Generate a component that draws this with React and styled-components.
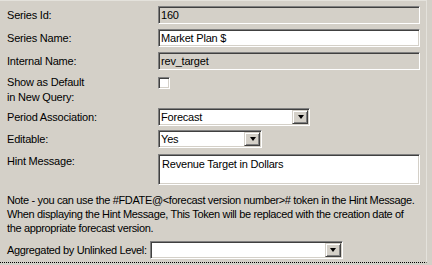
import styled, { createGlobalStyle } from "styled-components"

const Global = createGlobalStyle`
  body {
    margin: 0;
    background: #d4d0c8;
    font-family: "Liberation Sans", Arial, sans-serif;
    font-size: 11px;
    letter-spacing: -0.2px;
    color: #000;
  }
`

// panneau principal, façon boîte de dialogue Windows classique
const Panel = styled.div`
  width: 427px;
  height: 263px;
  box-sizing: border-box;
  background: #d4d0c8;
  border-right: 1px solid #e4e2dc;
  border-top: 1px solid #e4e2dc;
  padding: 5px 0 0 7px;
  border-bottom: 1px dotted #000;
  overflow: hidden;
`

const Row = styled.div`
  display: grid;
  grid-template-columns: 151px 1fr;
  align-items: ${p => (p.top ? "start" : "center")};
  margin-bottom: ${p => p.gap ?? 5}px;
  height: ${p => p.h}px;
`

const Label = styled.div`
  line-height: 15px;
  white-space: nowrap;
  letter-spacing: ${p => (p.tight ? "-0.35px" : "inherit")};
`

const Sunken = styled.div`
  box-sizing: border-box;
  width: ${p => p.w}px;
  height: ${p => p.h || 18}px;
  background: ${p => (p.ro ? "#d4d0c8" : "#fff")};
  border-top: 1px solid #808080;
  border-left: 1px solid #808080;
  border-right: 1px solid #fff;
  border-bottom: 1px solid #fff;
  box-shadow: inset 1px 1px 0 #404040, inset -1px -1px 0 #d4d0c8;
  padding: ${p => (p.multi ? "3px 3px" : "0 2px")};
  display: flex;
  align-items: ${p => (p.multi ? "flex-start" : "center")};
  justify-content: space-between;
  font-size: 11px;
`

const Check = styled.div`
  width: 12px;
  height: 12px;
  box-sizing: border-box;
  background: #fff;
  border-top: 1px solid #808080;
  border-left: 1px solid #808080;
  border-right: 1px solid #fff;
  border-bottom: 1px solid #fff;
  box-shadow: inset 1px 1px 0 #404040, inset -1px -1px 0 #d4d0c8;
  margin-top: 2px;
`

const DropBtn = styled.div`
  width: 16px;
  height: 14px;
  box-sizing: border-box;
  background: #d4d0c8;
  border-top: 1px solid #d4d0c8;
  border-left: 1px solid #d4d0c8;
  border-right: 1px solid #404040;
  border-bottom: 1px solid #404040;
  box-shadow: inset 1px 1px 0 #fff, inset -1px -1px 0 #808080;
  display: flex;
  align-items: center;
  justify-content: center;
  margin-right: -1px;
`

const Arrow = styled.div`
  width: 0;
  height: 0;
  border-left: 3.5px solid transparent;
  border-right: 3.5px solid transparent;
  border-top: 4px solid #000;
  margin-left: 1px;
`

const Note = styled.p`
  margin: 8px 0 6px;
  line-height: 14px;
  letter-spacing: -0.35px;
  white-space: nowrap;
`

const AggRow = styled.div`
  display: flex;
  align-items: center;
  gap: 3px;
`

const Select = ({ w, value }) => (
  <Sunken w={w}>
    <span>{value}</span>
    <DropBtn>
      <Arrow />
    </DropBtn>
  </Sunken>
)

const App = () => {
  return (
    <>
      <Global />
      <Panel>
        <Row h={18}>
          <Label>Series Id:</Label>
          <Sunken w={262} ro>160</Sunken>
        </Row>
        <Row h={18}>
          <Label>Series Name:</Label>
          <Sunken w={262}>Market Plan $</Sunken>
        </Row>
        <Row h={18}>
          <Label>Internal Name:</Label>
          <Sunken w={262} ro>rev_target</Sunken>
        </Row>
        <Row h={30} top gap={3}>
          <Label>Show as Default<br />in New Query:</Label>
          <Check />
        </Row>
        <Row h={18} gap={4}>
          <Label>Period Association:</Label>
          <Select w={152} value="Forecast" />
        </Row>
        <Row h={18} gap={6}>
          <Label>Editable:</Label>
          <Select w={104} value="Yes" />
        </Row>
        <Row h={31} top gap={0}>
          <Label>Hint Message:</Label>
          <Sunken w={262} h={31} multi>Revenue Target in Dollars</Sunken>
        </Row>
        <Note>
          Note - you can use the #FDATE@&lt;forecast version number&gt;# token in the Hint Message.
          <br />
          When displaying the Hint Message, This Token will be replaced with the creation date of
          <br />
          the appropriate forecast version.
        </Note>
        <AggRow>
          <Label tight>Aggregated by Unlinked Level:</Label>
          <Select w={193} value="" />
        </AggRow>
      </Panel>
    </>
  )
}

export default App
